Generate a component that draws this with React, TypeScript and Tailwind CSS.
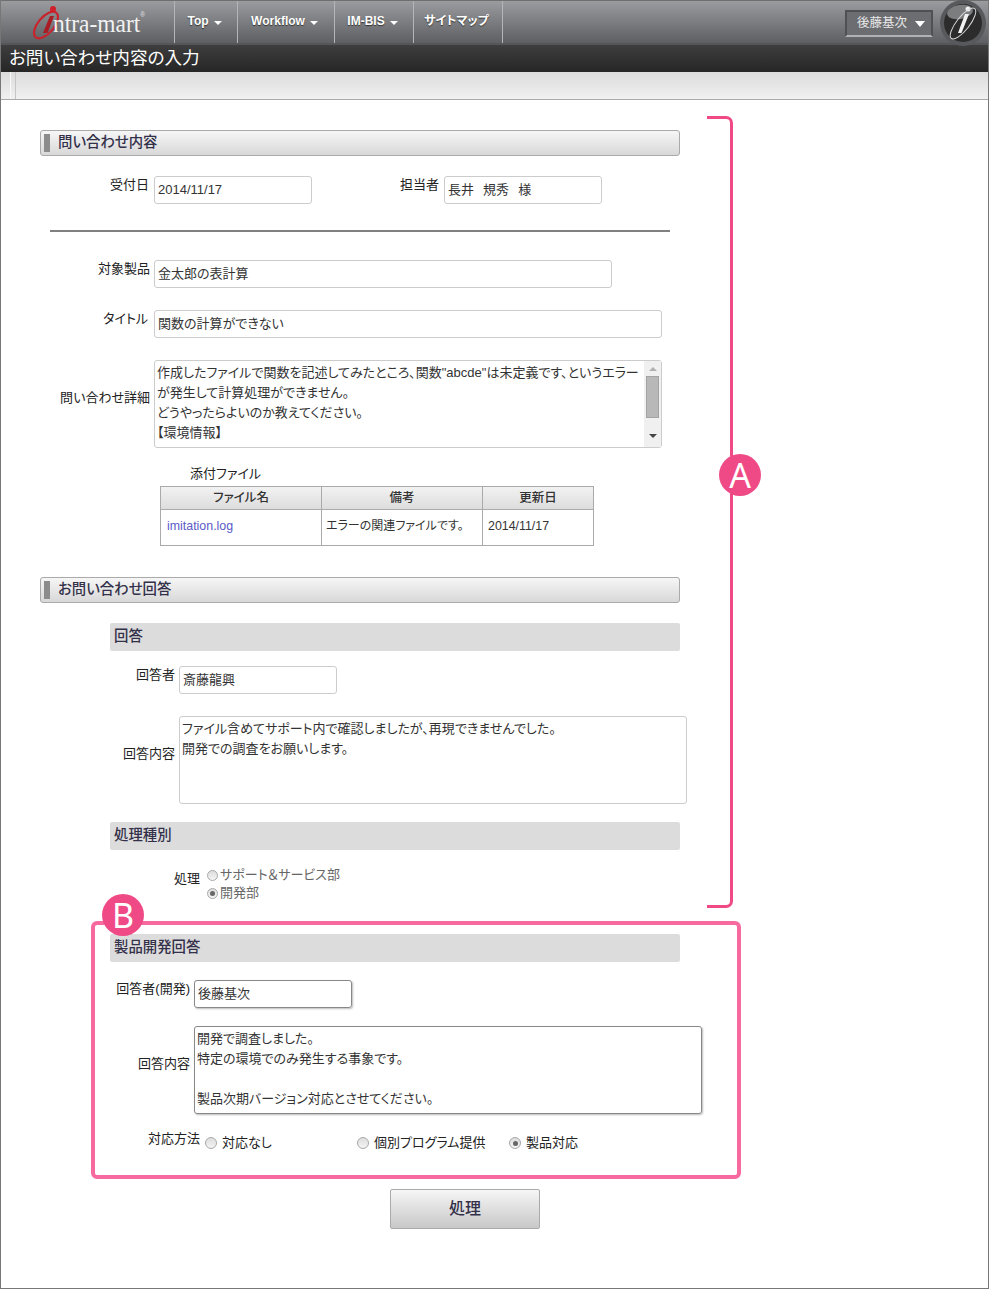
const navItems = [
  { label: "Top", width: "w-[63px]", caret: true },
  { label: "Workflow", width: "w-[97px]", caret: true },
  { label: "IM-BIS", width: "w-[79px]", caret: true },
  { label: "サイトマップ", width: "w-[89px]", caret: false },
]

function Logo() {
  return (
    <svg width="173" height="43" viewBox="0 0 173 43">
      <ellipse cx="45" cy="24" rx="8" ry="16" transform="rotate(40 45 24)" fill="none" stroke="#c8232c" strokeWidth="2.2" />
      <circle cx="52" cy="8" r="3" fill="#d0202a" />
      <path d="M49 15 L42 32 L46.5 32 L53 15 Z" fill="#a81c24" />
      <text x="52" y="31" fontFamily="'Liberation Serif', serif" fontSize="26" fill="#f2f2f2" textLength="92" lengthAdjust="spacingAndGlyphs">
        ntra-mart
        <tspan fontFamily="'Liberation Sans', sans-serif" fontSize="7" dy="-15" fill="#e5e5e5">
          ®
        </tspan>
      </text>
    </svg>
  )
}

function BrandBadge() {
  return (
    <svg width="48" height="47" viewBox="0 0 48 47" className="absolute right-[2px] top-[-1px]">
      <circle cx="25" cy="23" r="23" fill="#58595c" />
      <circle cx="25" cy="23" r="19" fill="#2c2c2c" />
      <ellipse cx="22" cy="12" rx="13" ry="7" transform="rotate(-10 22 12)" fill="#7c7d7f" />
      <circle cx="30" cy="9" r="2.5" fill="#f0f0f0" />
      <path d="M27 14 L20 33 L23.5 33 L31 14 Z" fill="#f2f2f2" />
      <ellipse cx="25" cy="23.5" rx="6.5" ry="19" transform="rotate(38 25 23.5)" fill="none" stroke="#d8d8d8" strokeWidth="1" />
    </svg>
  )
}

function SectionHeader({ title, className }: { title: string; className: string }) {
  return (
    <div className={`flex h-[26px] w-[640px] items-center rounded-[3px] border border-[#aaaaaa] bg-gradient-to-b from-[#f6f6f6] to-[#d8d8d8] pl-[3px] ${className}`}>
      <div className="h-[18px] w-[6px] bg-[#8c8c8c]" />
      <div className="mb-[1px] ml-[8px] text-[14.4px] font-medium text-[#33304a]">{title}</div>
    </div>
  )
}

function SubBar({ title, className }: { title: string; className: string }) {
  return (
    <div className={`ml-[70px] flex h-[28px] w-[570px] items-center rounded-[2px] bg-[#dcdcdc] pb-[1px] pl-[4px] text-[14.4px] font-medium text-[#33304a] ${className}`}>
      {title}
    </div>
  )
}

function Label({ text, className }: { text: string; className: string }) {
  return <div className={`shrink-0 whitespace-nowrap text-right text-[13px] leading-[18px] text-[#222222] ${className}`}>{text}</div>
}

function Field({ text, className }: { text: string; className: string }) {
  return (
    <div className={`flex h-[28px] shrink-0 items-center rounded-[3px] border pl-[3px] text-[13px] text-[#333333] ${className}`}>
      {text}
    </div>
  )
}

function TextBox({ lines, className }: { lines: string[]; className: string }) {
  return (
    <div className={`h-[88px] shrink-0 whitespace-nowrap rounded-[3px] border pl-[2px] pt-[2px] text-[13px] leading-[20px] text-[#333333] ${className}`}>
      {lines.map((line, i) => (
        <div key={i} className="h-[20px]">
          {line || " "}
        </div>
      ))}
    </div>
  )
}

function Radio({ checked, className }: { checked?: boolean; className: string }) {
  return (
    <div className={`flex shrink-0 items-center justify-center rounded-full border border-[#a8a8a8] bg-gradient-to-b from-[#dddddd] to-[#f4f4f4] ${className}`}>
      {checked && <div className="h-[5px] w-[5px] rounded-full bg-[#666666]" />}
    </div>
  )
}

export default function App() {
  return (
    <div className="relative h-[1289px] w-[989px] overflow-hidden border-x border-b border-[#777777] bg-white font-['Liberation_Sans','Noto_Sans_CJK_JP',sans-serif] [font-feature-settings:'palt']">
      {/* Global nav */}
      <div className="relative flex h-[45px] border-t border-[#6f6f6f] border-b-[2px] border-b-[#555659] bg-gradient-to-b from-[#9b9ca0] to-[#5e5f63]">
        <div className="w-[173px] shrink-0">
          <Logo />
        </div>
        {navItems.map((item) => (
          <div
            key={item.label}
            className={`flex shrink-0 items-center justify-center border-l border-[#b4b5b8] pb-[3px] pr-[3px] text-[12px] font-bold text-white [text-shadow:0_1px_1px_#333] ${item.width}`}
          >
            {item.label}
            {item.caret && <div className="ml-[5px] mt-[4px] h-0 w-0 border-x-[4px] border-t-[4px] border-x-transparent border-t-white" />}
          </div>
        ))}
        <div className="border-l border-[#b4b5b8]" />
        <div className="ml-auto mr-[55px] mt-[9px] flex h-[27px] w-[88px] items-center justify-end rounded-[1px] border-2 border-[#4f5054] border-b-[#b0b1b3] bg-[#6c6d71] pr-[6px] text-[12.5px] text-[#e8e8e8]">
          <span className="mr-[8px]">後藤基次</span>
          <div className="h-0 w-0 border-x-[5px] border-t-[6px] border-x-transparent border-t-white" />
        </div>
        <BrandBadge />
      </div>

      {/* Page title */}
      <div className="flex h-[27px] items-center bg-gradient-to-b from-[#3e3e3e] to-[#262626] pl-[8px] text-[17.6px] text-white">
        お問い合わせ内容の入力
      </div>

      {/* Toolbar */}
      <div className="flex h-[28px] border-b border-[#aaaaaa] bg-gradient-to-b from-[#dcdcdc] to-[#f0f0f0] pl-[9px]">
        <div className="w-[6px] border-x border-[#f8f8f8] border-r-[#c4c4c4]" />
      </div>

      {/* Form */}
      <div className="pl-[39px]">
        <SectionHeader title="問い合わせ内容" className="mt-[30px]" />

        <div className="mt-[20px] flex">
          <Label text="受付日" className="w-[109px]" />
          <Field text="2014/11/17" className="ml-[5px] w-[158px] border-[#cccccc]" />
          <Label text="担当者" className="w-[127px]" />
          <Field text={"長井\u2002\u2009規秀\u2002\u2009様"} className="ml-[5px] w-[158px] border-[#cccccc]" />
        </div>

        <div className="ml-[10px] mt-[26px] h-[2px] w-[620px] bg-[#808080]" />

        <div className="mt-[28px] flex">
          <Label text="対象製品" className="w-[110px]" />
          <Field text="金太郎の表計算" className="ml-[4px] w-[458px] border-[#cccccc]" />
        </div>

        <div className="mt-[22px] flex">
          <Label text="タイトル" className="w-[108px]" />
          <Field text="関数の計算ができない" className="ml-[6px] w-[508px] border-[#cccccc]" />
        </div>

        <div className="mt-[22px] flex">
          <Label text="問い合わせ詳細" className="mt-[29px] w-[110px]" />
          <div className="relative ml-[4px]">
            <TextBox
              className="w-[508px] border-[#cccccc]"
              lines={[
                "作成したファイルで関数を記述してみたところ、関数\"abcde\"は未定義です、というエラー",
                "が発生して計算処理ができません。",
                "どうやったらよいのか教えてください。",
                "【環境情報】",
              ]}
            />
            <div className="absolute bottom-[1px] right-[1px] top-[1px] flex w-[17px] flex-col items-center bg-[#f0f0f0] pt-[6px]">
              <div className="h-0 w-0 border-x-[4px] border-b-[4px] border-x-transparent border-b-[#b0b0b0]" />
              <div className="mt-[5px] h-[42px] w-[13px] border border-[#a4a4a4] bg-[#b8b8b8]" />
              <div className="mt-[16px] h-0 w-0 border-x-[4px] border-t-[4px] border-x-transparent border-t-[#444444]" />
            </div>
          </div>
        </div>

        <div className="ml-[150px] mt-[17px] text-[13px] leading-[18px] text-[#222222]">添付ファイル</div>

        <table className="ml-[120px] mt-[3px] w-[434px] table-fixed border-collapse text-[#333333]">
          <thead>
            <tr className="h-[23px] bg-gradient-to-b from-[#f2f2f2] to-[#dcdcdc] text-[12.5px]">
              <th className="w-[161px] border border-[#aaaaaa] font-medium">ファイル名</th>
              <th className="w-[161px] border border-[#aaaaaa] font-medium">備考</th>
              <th className="border border-[#aaaaaa] font-medium">更新日</th>
            </tr>
          </thead>
          <tbody>
            <tr className="h-[36px] text-[12px]">
              <td className="border border-[#aaaaaa] pb-[3px] pl-[6px] text-[12.4px] text-[#5a5ac8]">imitation.log</td>
              <td className="whitespace-nowrap border border-[#aaaaaa] pb-[3px] pl-[4px]">エラーの関連ファイルです。</td>
              <td className="border border-[#aaaaaa] pb-[3px] pl-[5px] text-[12.4px]">2014/11/17</td>
            </tr>
          </tbody>
        </table>

        <SectionHeader title="お問い合わせ回答" className="mt-[31px]" />
        <SubBar title="回答" className="mt-[20px]" />

        <div className="mt-[15px] flex">
          <Label text="回答者" className="w-[135px]" />
          <Field text="斎藤龍興" className="ml-[4px] w-[158px] border-[#cccccc]" />
        </div>

        <div className="mt-[22px] flex">
          <Label text="回答内容" className="mt-[29px] w-[135px]" />
          <TextBox
            className="ml-[4px] w-[508px] border-[#cccccc]"
            lines={["ファイル含めてサポート内で確認しましたが、再現できませんでした。", "開発での調査をお願いします。"]}
          />
        </div>

        <SubBar title="処理種別" className="mt-[18px]" />

        <div className="mt-[16px] flex">
          <Label text="処理" className="mt-[4px] w-[160px]" />
          <div className="ml-[7px] text-[13px] leading-[18px] text-[#666666]">
            <div className="flex items-center">
              <Radio className="mr-[2px] h-[11px] w-[11px]" />
              サポート＆サービス部
            </div>
            <div className="flex items-center">
              <Radio checked className="mr-[2px] h-[11px] w-[11px]" />
              開発部
            </div>
          </div>
        </div>

        <SubBar title="製品開発回答" className="mt-[32px]" />

        <div className="mt-[18px] flex">
          <Label text="回答者(開発)" className="w-[150px]" />
          <Field text="後藤基次" className="ml-[4px] w-[158px] border-[#888888] shadow-[1px_1px_2px_#bbbbbb]" />
        </div>

        <div className="mt-[18px] flex">
          <Label text="回答内容" className="mt-[29px] w-[150px]" />
          <TextBox
            className="ml-[4px] w-[508px] border-[#888888] shadow-[1px_1px_2px_#bbbbbb]"
            lines={["開発で調査しました。", "特定の環境でのみ発生する事象です。", "", "製品次期バージョン対応とさせてください。"]}
          />
        </div>

        <div className="mt-[16px] flex text-[13px] text-[#222222]">
          <Label text="対応方法" className="w-[160px]" />
          <div className="ml-[5px] mt-[4px] flex w-[152px] items-center leading-[18px]">
            <Radio className="mr-[5px] h-[12px] w-[12px]" />
            対応なし
          </div>
          <div className="mt-[4px] flex w-[152px] items-center leading-[18px]">
            <Radio className="mr-[5px] h-[12px] w-[12px]" />
            個別プログラム提供
          </div>
          <div className="mt-[4px] flex items-center leading-[18px]">
            <Radio checked className="mr-[5px] h-[12px] w-[12px]" />
            製品対応
          </div>
        </div>

        <div className="ml-[350px] mt-[37px] flex h-[40px] w-[150px] items-center justify-center rounded-[2px] border border-[#aaaaaa] bg-gradient-to-b from-[#f6f6f6] to-[#c8c8c8] text-[16px] font-medium text-[#33304a]">
          処理
        </div>
      </div>

      {/* Annotation A */}
      <div className="absolute left-[706px] top-[116px] h-[792px] w-[26px] rounded-r-[7px] border-y-[3px] border-r-[3px] border-[#ef4a86]" />
      <div className="absolute left-[718px] top-[454px] flex h-[42px] w-[42px] items-center justify-center rounded-full bg-[#ef4a86] font-['Noto_Sans',sans-serif] text-[34px] text-white">
        A
      </div>

      {/* Annotation B */}
      <div className="absolute left-[90px] top-[921px] h-[258px] w-[650px] rounded-[6px] border-[4px] border-[#f76a9f]" />
      <div className="absolute left-[101px] top-[894px] flex h-[42px] w-[42px] items-center justify-center rounded-full bg-[#ef4a86] font-['Noto_Sans',sans-serif] text-[34px] text-white">
        B
      </div>
    </div>
  )
}
